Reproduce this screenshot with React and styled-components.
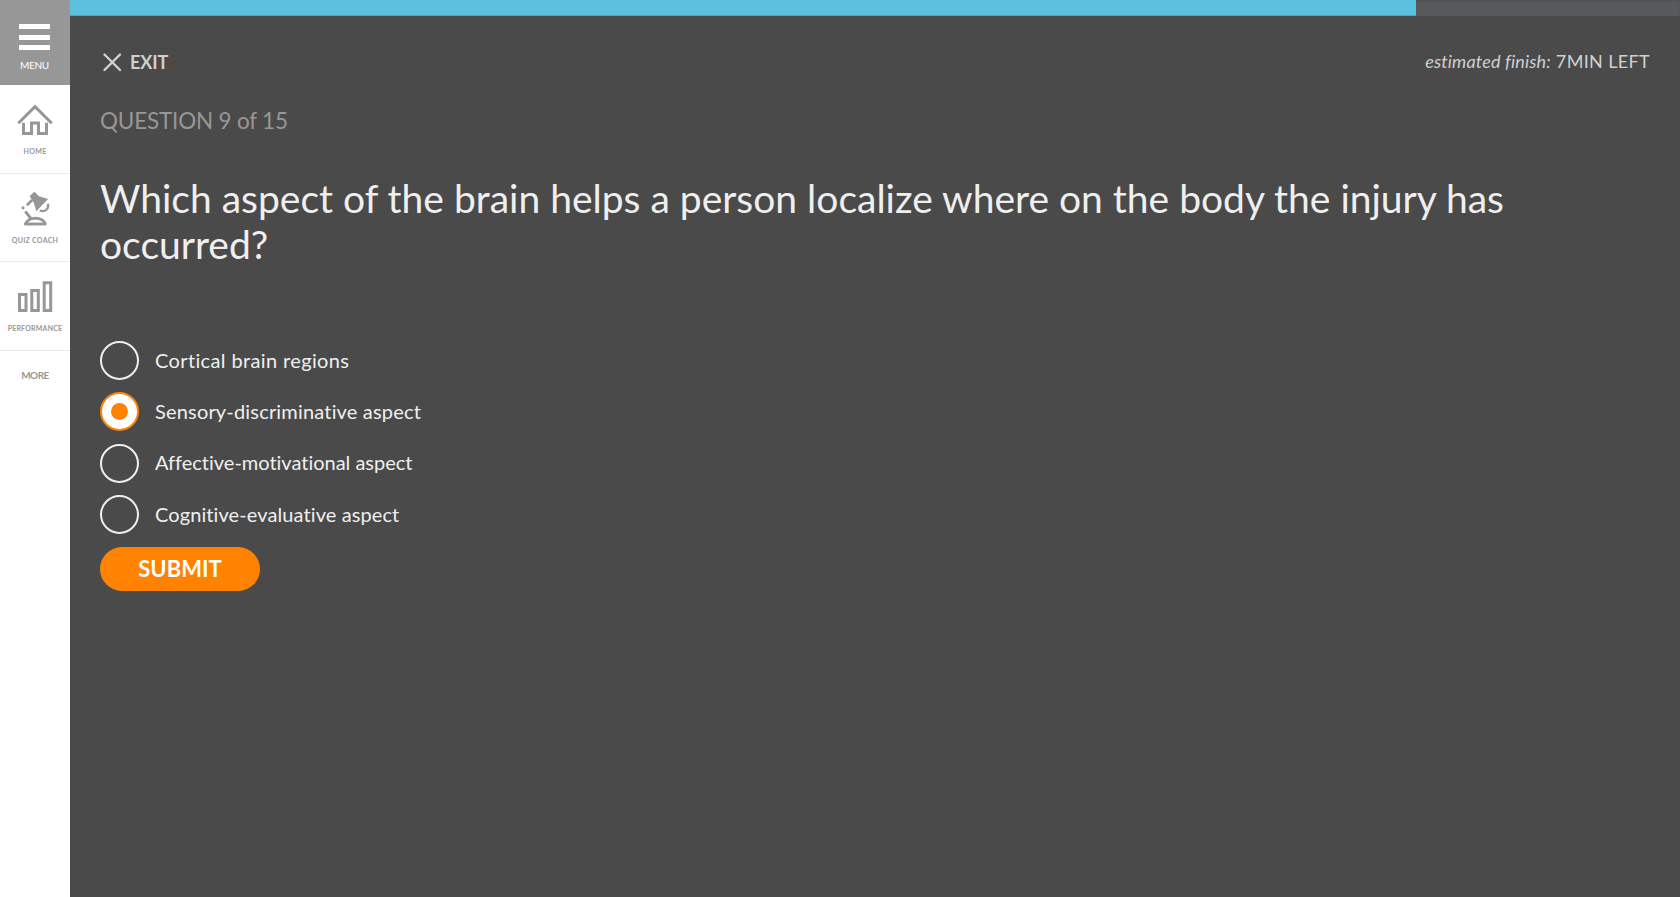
import React from "react";
import styled, { createGlobalStyle } from "styled-components";

const GlobalStyle = createGlobalStyle`
  *, *::before, *::after { box-sizing: border-box; }
  body {
    margin: 0;
    background: #4a4a4a;
    font-family: Lato, "Liberation Sans", sans-serif;
  }
  button { font-family: inherit; border: 0; padding: 0; background: none; }
`;

const Page = styled.div`
  display: flex;
  height: 100vh;
  overflow: hidden;
`;

const Sidebar = styled.nav`
  width: 70px;
  flex: none;
  display: flex;
  flex-direction: column;
  background: #fff;
`;

const MenuButton = styled.button`
  height: 85px;
  padding: 24px 1px 0 0;
  display: flex;
  flex-direction: column;
  align-items: center;
  background: #979797;
  color: #fff;
  font-size: 10px;
  line-height: 12px;
  letter-spacing: -0.3px;
`;

const MenuBars = styled.span`
  display: flex;
  flex-direction: column;
  gap: 5.5px;
  width: 31px;
  margin-bottom: 9px;
`;

const MenuBar = styled.span`
  height: 5px;
  background: #fff;
`;

const NavItem = styled.a`
  height: 88.7px;
  padding-top: 17px;
  display: flex;
  flex-direction: column;
  align-items: center;
  border-bottom: 1px solid #ebebeb;
  color: #979797;
`;

const NavLabel = styled.span`
  margin-top: 8px;
  font-size: 7px;
  font-weight: 700;
  line-height: 10px;
  white-space: nowrap;
  letter-spacing: ${(p) => p.$spacing || "0"};
`;

const MoreLink = styled.a`
  padding-top: 18px;
  text-align: center;
  font-size: 10px;
  font-weight: 700;
  line-height: 12px;
  letter-spacing: -0.5px;
  color: #979797;
`;

const Main = styled.main`
  flex: 1;
  min-width: 0;
  background: #4a4a4a;
`;

const ProgressTrack = styled.div`
  height: 16px;
  background: #58595b;
  box-shadow: inset 0 1px 2px rgba(0, 0, 0, 0.1);
`;

const ProgressFill = styled.div`
  height: 100%;
  background: #5bc0de;
  box-shadow: inset 0 -1px 0 rgba(0, 0, 0, 0.15);
`;

const Content = styled.div`
  padding: 34px 30px 0;
`;

const TopBar = styled.header`
  display: flex;
  justify-content: space-between;
  align-items: flex-start;
  height: 24px;
`;

const ExitButton = styled.button`
  display: flex;
  align-items: center;
  gap: 8px;
  padding-left: 3px;
  color: #d0d0d0;
  font-size: 18px;
  font-weight: 700;
  line-height: 24px;
  letter-spacing: -0.1px;
`;

const Estimate = styled.div`
  font-size: 18px;
  line-height: 22px;
  color: #d0d0d0;
  letter-spacing: 0.35px;
`;

const EstimateLabel = styled.em`
  letter-spacing: 0.16px;
`;

const Counter = styled.div`
  margin-top: 33px;
  font-size: 22.5px;
  line-height: 28px;
  letter-spacing: -0.2px;
  color: #979797;
`;

const Question = styled.h1`
  margin: 40px 0 0;
  font-size: 39px;
  font-weight: 400;
  line-height: 46px;
  color: #efefef;
`;

const Options = styled.div`
  display: flex;
  flex-direction: column;
  gap: 12.3px;
  margin-top: 74px;
`;

const Option = styled.label`
  display: flex;
  align-items: center;
  gap: 16px;
  height: 39px;
`;

const Radio = styled.span`
  display: flex;
  align-items: center;
  justify-content: center;
  width: 39px;
  height: 39px;
  border: 2px solid ${(p) => (p.$selected ? "#ff8200" : "#efefef")};
  border-radius: 50%;
  background: ${(p) => (p.$selected ? "#fff" : "transparent")};
`;

const RadioDot = styled.span`
  width: 17px;
  height: 17px;
  border-radius: 50%;
  background: #ff8200;
`;

const OptionText = styled.span`
  padding-bottom: 1.4px;
  font-size: 20px;
  line-height: 24px;
  color: #efefef;
  letter-spacing: ${(p) => p.$spacing};
`;

const SubmitButton = styled.button`
  display: block;
  width: 160px;
  height: 44px;
  margin-top: 13px;
  border-radius: 22px;
  background: #ff8200;
  color: #fff;
  font-size: 22px;
  font-weight: 700;
  line-height: 44px;
`;

const CloseIcon = () => (
  <svg width="19" height="19" viewBox="0 0 19 19" fill="none" stroke="currentColor" strokeWidth="2.4" strokeLinecap="round">
    <path d="M1.5 1.5 17 17M17 1.5 1.5 17" />
  </svg>
);

const HomeIcon = () => (
  <svg width="36" height="36" viewBox="0 0 36 36" fill="none" stroke="#979797" strokeWidth="3">
    <path d="M1.3 21.3 18 4.7 34.7 21.3" />
    <path d="M6.5 20.8V31.5H14.5V21H21.5V31.5H29.5V20.8" />
  </svg>
);

const LampIcon = () => (
  <svg width="36" height="36" viewBox="0 0 36 36" fill="none" stroke="#979797">
    <path d="M12.5 5.3 17.4 0.8 22 5.3 31.2 8 19.3 20.3 16.6 11.3Z" fill="#979797" stroke="none" />
    <path d="M9.8 14.3 15.2 9" strokeWidth="2.7" />
    <circle cx="6" cy="16.8" r="1.6" fill="#979797" stroke="none" />
    <path d="M8.3 20.3 14.8 28.5" strokeWidth="2.9" />
    <path d="M31 12.8C32 18.3 28 21.3 22.8 19.5" strokeWidth="2.3" />
    <path d="M8.5 33.5C10.5 25.2 26.5 25.2 28.3 33.5" strokeWidth="2.9" />
    <path d="M7.3 33H29.3" strokeWidth="2.9" />
  </svg>
);

const ChartIcon = () => (
  <svg width="36" height="36" viewBox="0 0 36 36" fill="none" stroke="#979797" strokeWidth="3">
    <rect x="2.5" y="15.5" width="6.5" height="16" />
    <rect x="14.8" y="11.5" width="6.5" height="20" />
    <rect x="27.2" y="3.8" width="6.5" height="27.7" />
  </svg>
);

const NAV = [
  { label: "HOME", Icon: HomeIcon, spacing: "0.35px" },
  { label: "QUIZ COACH", Icon: LampIcon, spacing: "0.3px" },
  { label: "PERFORMANCE", Icon: ChartIcon, spacing: "0.2px" },
];

const OPTIONS = [
  { text: "Cortical brain regions", spacing: "0.37px" },
  { text: "Sensory-discriminative aspect", spacing: "0.18px" },
  { text: "Affective-motivational aspect", spacing: "-0.01px" },
  { text: "Cognitive-evaluative aspect", spacing: "0.1px" },
];

export default function App() {
  const selected = 1;
  return (
    <Page>
      <GlobalStyle />
      <Sidebar>
        <MenuButton>
          <MenuBars>
            <MenuBar />
            <MenuBar />
            <MenuBar />
          </MenuBars>
          MENU
        </MenuButton>
        {NAV.map(({ label, Icon, spacing }) => (
          <NavItem key={label}>
            <Icon />
            <NavLabel $spacing={spacing}>{label}</NavLabel>
          </NavItem>
        ))}
        <MoreLink>MORE</MoreLink>
      </Sidebar>
      <Main>
        <ProgressTrack>
          <ProgressFill style={{ width: "83.6%" }} />
        </ProgressTrack>
        <Content>
          <TopBar>
            <ExitButton>
              <CloseIcon />
              EXIT
            </ExitButton>
            <Estimate>
              <EstimateLabel>estimated finish:</EstimateLabel> 7MIN LEFT
            </Estimate>
          </TopBar>
          <Counter>QUESTION 9 of 15</Counter>
          <Question>
            Which aspect of the brain helps a person localize where on the body the injury has occurred?
          </Question>
          <Options>
            {OPTIONS.map(({ text, spacing }, i) => (
              <Option key={text}>
                <Radio $selected={i === selected}>{i === selected && <RadioDot />}</Radio>
                <OptionText $spacing={spacing}>{text}</OptionText>
              </Option>
            ))}
          </Options>
          <SubmitButton>SUBMIT</SubmitButton>
        </Content>
      </Main>
    </Page>
  );
}
